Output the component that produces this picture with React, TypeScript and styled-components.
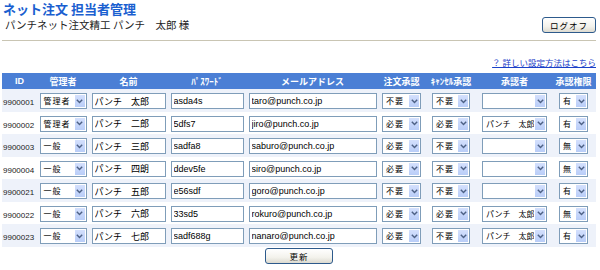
import React from "react";
import styled, { createGlobalStyle } from "styled-components";

const GlobalStyle = createGlobalStyle`
  body {
    margin: 0;
    background: #ffffff;
    font-family: "Liberation Sans", "Noto Sans CJK JP", sans-serif;
    color: #000000;
  }
`;

const JP = `"Liberation Sans", "Noto Sans CJK JP", sans-serif`;

const Page = styled.div`
  width: 600px;
  padding: 0 4px 0 2px;
  box-sizing: border-box;
`;

const Title = styled.h1`
  margin: 0;
  padding-left: 1px;
  height: 16px;
  font-family: "Noto Sans CJK JP", sans-serif;
  font-size: 13px;
  line-height: 17px;
  font-weight: 700;
  color: #1a5fd0;
  white-space: nowrap;
`;

const SubRow = styled.div`
  display: flex;
  align-items: center;
  justify-content: space-between;
  height: 18px;
  padding-left: 3px;
`;

const UserName = styled.span`
  font-family: "Noto Sans CJK JP", sans-serif;
  font-size: 10.5px;
  line-height: 14px;
  color: #222222;
`;

const XpButton = styled.button<{ $w: number }>`
  width: ${(p) => p.$w}px;
  height: 16px;
  padding: 0;
  border: 1px solid #2d5a8c;
  border-radius: 3px;
  background: linear-gradient(#ffffff, #f3f2ec 60%, #dcdad0);
  font-family: "Noto Sans CJK JP", sans-serif;
  font-size: 8.5px;
  line-height: 14px;
  letter-spacing: 1px;
  color: #000000;
  cursor: pointer;
`;

const Rule = styled.hr`
  margin: 6px 0 0 0;
  border: 0;
  border-top: 1px solid #c9c5b3;
  height: 0;
`;

const LinkRow = styled.div`
  display: flex;
  justify-content: flex-end;
  margin-top: 15px;
  height: 12px;
`;

const HelpLink = styled.a`
  font-family: "Noto Sans CJK JP", sans-serif;
  font-size: 8.5px;
  line-height: 12px;
  color: #1a40c8;
  text-decoration: underline;
`;

const Table = styled.table`
  margin-top: 5px;
  width: 594px;
  border-collapse: collapse;
  table-layout: fixed;
`;

const Th = styled.th`
  height: 16px;
  padding: 0;
  background: #4b7fd5;
  color: #ffffff;
  font-family: ${JP};
  font-size: 9px;
  font-weight: 700;
  text-align: center;
  white-space: nowrap;
`;

const Tr = styled.tr<{ $shade: boolean }>`
  height: 22.5px;
  background: ${(p) => (p.$shade ? "#eef2fa" : "#ffffff")};
`;

const Td = styled.td<{ $left?: boolean }>`
  padding: 0;
  text-align: ${(p) => (p.$left ? "left" : "center")};
  vertical-align: middle;
`;

const IdText = styled.span`
  padding-left: 1px;
  font-size: 8px;
  color: #222222;
`;

const TextInput = styled.input<{ $w: number }>`
  width: ${(p) => p.$w}px;
  height: 16px;
  box-sizing: border-box;
  margin: 0;
  padding: 0 2px;
  border: 1px solid #7f9db9;
  background: #ffffff;
  font-family: ${JP};
  font-size: 9px;
  color: #000000;
  vertical-align: middle;
`;

const SelectBox = styled.div<{ $w: number }>`
  display: inline-flex;
  align-items: stretch;
  width: ${(p) => p.$w}px;
  height: 16px;
  box-sizing: border-box;
  border: 1px solid #7f9db9;
  background: #ffffff;
  vertical-align: middle;
  text-align: left;
`;

const SelectText = styled.span<{ $tight?: boolean }>`
  flex: 1;
  min-width: 0;
  white-space: nowrap;
  padding-left: 3px;
  font-family: "Noto Sans CJK JP", sans-serif;
  font-size: 8px;
  line-height: 14px;
  letter-spacing: ${(p) => (p.$tight ? "0" : "1px")};
  color: #000000;
`;

const ArrowBtn = styled.span`
  width: 12px;
  flex: none;
  box-sizing: border-box;
  display: flex;
  align-items: center;
  justify-content: center;
  border: 1px solid #ffffff;
  background: linear-gradient(#d4e0fd, #b9cdf8);
`;

const Footer = styled.div`
  display: flex;
  justify-content: center;
  padding: 1px 0 0 0;
  width: 594px;
`;

type Row = {
  id: string;
  role: string;
  name: string;
  pw: string;
  mail: string;
  order: string;
  cancel: string;
  approver: string;
  auth: string;
};

const rows: Row[] = [
  { id: "9900001", role: "管理者", name: "パンチ　太郎", pw: "asda4s", mail: "taro@punch.co.jp", order: "不要", cancel: "不要", approver: "", auth: "有" },
  { id: "9900002", role: "管理者", name: "パンチ　二郎", pw: "5dfs7", mail: "jiro@punch.co.jp", order: "必要", cancel: "必要", approver: "パンチ　太郎", auth: "有" },
  { id: "9900003", role: "一般", name: "パンチ　三郎", pw: "sadfa8", mail: "saburo@punch.co.jp", order: "必要", cancel: "不要", approver: "", auth: "無" },
  { id: "9900004", role: "一般", name: "パンチ　四朗", pw: "ddev5fe", mail: "siro@punch.co.jp", order: "必要", cancel: "不要", approver: "", auth: "無" },
  { id: "9900021", role: "一般", name: "パンチ　五郎", pw: "e56sdf", mail: "goro@punch.co.jp", order: "不要", cancel: "不要", approver: "", auth: "有" },
  { id: "9900022", role: "一般", name: "パンチ　六郎", pw: "33sd5", mail: "rokuro@punch.co.jp", order: "必要", cancel: "必要", approver: "パンチ　太郎", auth: "無" },
  { id: "9900023", role: "一般", name: "パンチ　七郎", pw: "sadf688g", mail: "nanaro@punch.co.jp", order: "必要", cancel: "不要", approver: "パンチ　太郎", auth: "有" },
];

const Select = ({ w, value, tight }: { w: number; value: string; tight?: boolean }) => (
  <SelectBox $w={w}>
    <SelectText $tight={tight}>{value}</SelectText>
    <ArrowBtn>
      <svg width="7" height="5" viewBox="0 0 7 5">
        <path d="M0.8 0.8 L3.5 3.6 L6.2 0.8" fill="none" stroke="#4d6185" strokeWidth="1.4" />
      </svg>
    </ArrowBtn>
  </SelectBox>
);

const widths = [35, 52, 79, 78, 133, 45, 54, 73, 45];
const headers = ["ID", "管理者", "名前", "ﾊﾟｽﾜｰﾄﾞ", "メールアドレス", "注文承認", "ｷｬﾝｾﾙ承認", "承認者", "承認権限"];

export default function App() {
  return (
    <Page>
      <GlobalStyle />
      <Title>ネット注文 担当者管理</Title>
      <SubRow>
        <UserName>パンチネット注文精工 パンチ　太郎 様</UserName>
        <XpButton $w={54}>ログオフ</XpButton>
      </SubRow>
      <Rule />
      <LinkRow>
        <HelpLink href="#">？ 詳しい設定方法はこちら</HelpLink>
      </LinkRow>
      <Table>
        <colgroup>
          {widths.map((w, i) => (
            <col key={i} style={{ width: w }} />
          ))}
        </colgroup>
        <thead>
          <tr>
            {headers.map((h) => (
              <Th key={h}>{h}</Th>
            ))}
          </tr>
        </thead>
        <tbody>
          {rows.map((r, i) => (
            <Tr key={r.id} $shade={i % 2 === 0}>
              <Td $left>
                <IdText>{r.id}</IdText>
              </Td>
              <Td>
                <Select w={47} value={r.role} />
              </Td>
              <Td>
                <TextInput $w={74} defaultValue={r.name} />
              </Td>
              <Td>
                <TextInput $w={73} defaultValue={r.pw} />
              </Td>
              <Td>
                <TextInput $w={128} defaultValue={r.mail} />
              </Td>
              <Td>
                <Select w={39} value={r.order} />
              </Td>
              <Td>
                <Select w={38} value={r.cancel} />
              </Td>
              <Td>
                <Select w={65} value={r.approver} tight />
              </Td>
              <Td>
                <Select w={29} value={r.auth} />
              </Td>
            </Tr>
          ))}
        </tbody>
      </Table>
      <Footer>
        <XpButton $w={68}>更新</XpButton>
      </Footer>
    </Page>
  );
}
